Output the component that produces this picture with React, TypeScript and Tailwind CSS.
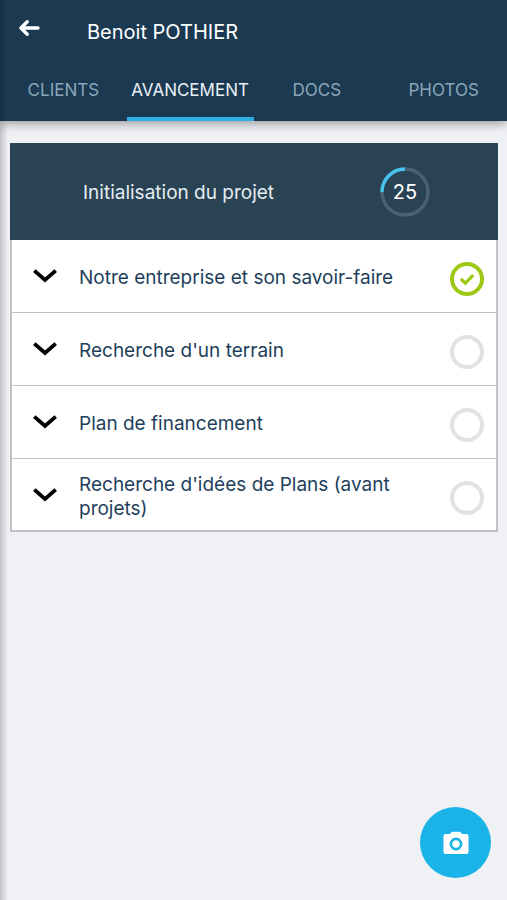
import { useState } from "react";

interface Step {
  id: string;
  label: string;
  done: boolean;
}

const TABS = ["CLIENTS", "AVANCEMENT", "DOCS", "PHOTOS"];

const INITIAL_STEPS: Step[] = [
  { id: "entreprise", label: "Notre entreprise et son savoir-faire", done: true },
  { id: "terrain", label: "Recherche d'un terrain", done: false },
  { id: "financement", label: "Plan de financement", done: false },
  { id: "plans", label: "Recherche d'idées de Plans (avant projets)", done: false },
];

function BackIcon() {
  return (
    <svg width="22" height="18" viewBox="0 0 22 18" fill="none" stroke="currentColor" strokeWidth="3.4" strokeLinecap="round" strokeLinejoin="round">
      <path d="M19 9H2.5M8.2 2.8L2 9L8.2 15.2" />
    </svg>
  );
}

function ChevronIcon() {
  return (
    <svg width="24" height="14" viewBox="0 0 24 14" fill="none" stroke="#000" strokeWidth="3.8">
      <path d="M1.3 1.6L12 11L22.7 1.6" />
    </svg>
  );
}

function CameraIcon() {
  return (
    <svg width="26" height="24" viewBox="0 0 26 24">
      <path
        fill="#fff"
        d="M2.5 3H7L8.4 1.3Q9 .7 9.8 .7H16.2Q17 .7 17.6 1.3L19 3H23.5Q25.5 3 25.5 5V21Q25.5 23 23.5 23H2.5Q.5 23 .5 21V5Q.5 3 2.5 3Z"
      />
      <circle cx="13" cy="13" r="5.1" fill="#fff" stroke="#1ab3e8" strokeWidth="2.6" />
    </svg>
  );
}

function ProgressRing({ value }: { value: number }) {
  const radius = 23;
  const length = 2 * Math.PI * radius;
  return (
    <div className="relative flex size-[50px] items-center justify-center">
      <svg className="absolute inset-0" width="50" height="50" viewBox="0 0 50 50" fill="none" strokeWidth="3.4">
        <circle cx="25" cy="25" r={radius} stroke="#4b6170" />
        {/* the arc runs counter-clockwise from the top */}
        <circle
          cx="25"
          cy="25"
          r={radius}
          stroke="#45c3ee"
          strokeDasharray={`${(length * value) / 100} ${length}`}
          transform="translate(50 0) scale(-1 1) rotate(-90 25 25)"
        />
      </svg>
      <span className="text-xl text-white">{value}</span>
    </div>
  );
}

function StepRow({ step, onToggle }: { step: Step; onToggle: () => void }) {
  return (
    <li className="flex min-h-[73px] items-center border-b border-[#c0c3c5] bg-white pr-3 last:border-b-2">
      <button type="button" className="flex min-w-0 flex-1 items-center gap-[22px] pr-10 pl-[21px] text-left">
        <span className="shrink-0">
          <ChevronIcon />
        </span>
        <span className="pt-1 text-[19px] leading-6 text-[#1e3f5c]">{step.label}</span>
      </button>
      <div className="pt-1.5">
        <div className="relative size-[34px]">
          <input
            type="checkbox"
            aria-label={step.label}
            checked={step.done}
            onChange={onToggle}
            className="block size-full appearance-none rounded-full border-4 border-[#e2e2e2] checked:border-[#9dc915]"
          />
          {step.done && (
            <svg className="pointer-events-none absolute inset-0" width="34" height="34" viewBox="0 0 34 34" fill="none">
              <path d="M10.8 16.8L15.4 21.2L23.2 13.2" stroke="#9dc915" strokeWidth="3.2" />
            </svg>
          )}
        </div>
      </div>
    </li>
  );
}

export default function App() {
  const [activeTab, setActiveTab] = useState("AVANCEMENT");
  const [steps, setSteps] = useState(INITIAL_STEPS);

  function toggleStep(id: string) {
    setSteps((prev) => prev.map((s) => (s.id === id ? { ...s, done: !s.done } : s)));
  }

  const progress = Math.round((steps.filter((s) => s.done).length / steps.length) * 100);

  return (
    <div className="relative min-h-screen bg-[#eff1f5] font-['Inter',sans-serif]">
      <header className="relative bg-[#1b3a51] shadow-[0_2px_10px_rgba(0,0,0,0.4)]">
        <div className="flex h-[60px] items-center gap-[46px] px-[19px]">
          <button type="button" aria-label="Retour" className="pb-1 text-white">
            <BackIcon />
          </button>
          <h1 className="pt-1 text-xl text-white">Benoit POTHIER</h1>
        </div>
        <nav className="grid h-[61px] grid-cols-4">
          {TABS.map((tab) => (
            <button
              key={tab}
              type="button"
              onClick={() => setActiveTab(tab)}
              className={
                tab === activeTab
                  ? "border-b-4 border-[#2fb0e2] pt-1 text-[17px] text-[#eaf1f6]"
                  : "border-b-4 border-transparent pt-1 text-[17px] text-[#8ba6b9]"
              }
            >
              {tab}
            </button>
          ))}
        </nav>
      </header>

      <main className="pt-[22px] pr-[9px] pb-24 pl-[10px]">
        <section>
          <div className="flex h-[97px] items-center justify-between bg-[#294354] pr-[68px] pl-[73px]">
            <h2 className="pt-1 text-[19px] text-[#e6edf1]">Initialisation du projet</h2>
            <ProgressRing value={progress} />
          </div>
          <ul className="border-x-2 border-[#c0c3c5]">
            {steps.map((step) => (
              <StepRow key={step.id} step={step} onToggle={() => toggleStep(step.id)} />
            ))}
          </ul>
        </section>
      </main>

      <div className="pointer-events-none absolute inset-y-0 left-0 w-2 bg-linear-to-r from-black/20 to-transparent" />

      <button
        type="button"
        aria-label="Prendre une photo"
        className="fixed right-4 bottom-[22px] flex size-[71px] items-center justify-center rounded-full bg-[#1ab3e8]"
      >
        <CameraIcon />
      </button>
    </div>
  );
}
